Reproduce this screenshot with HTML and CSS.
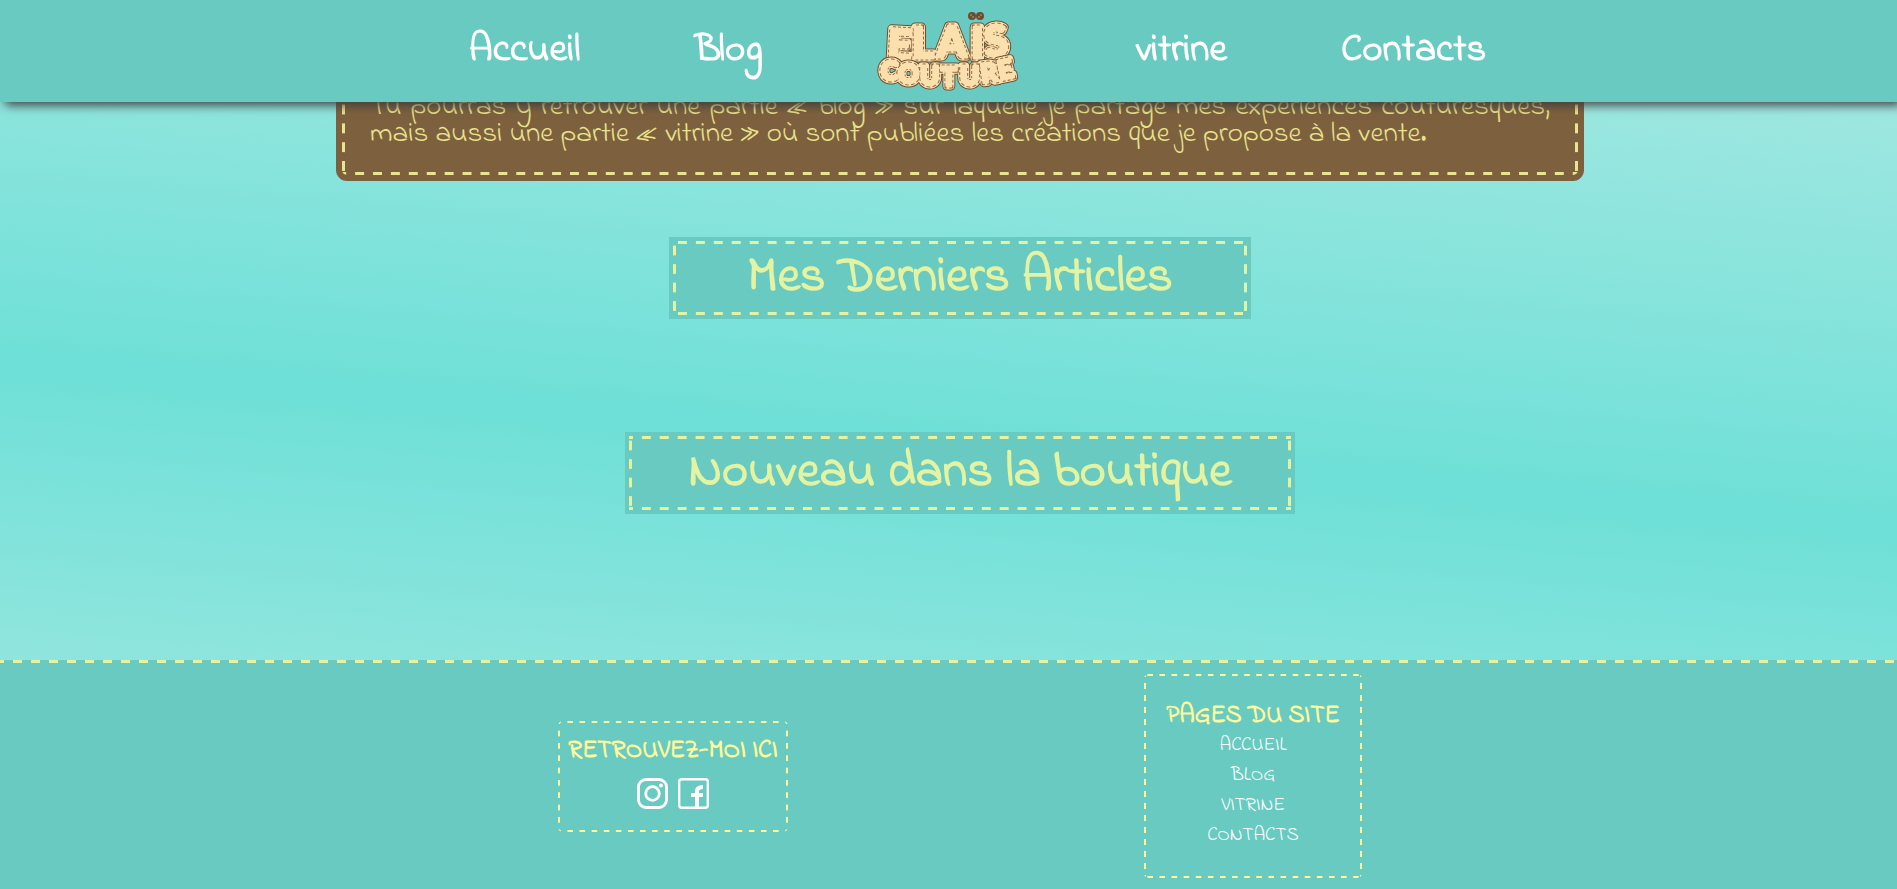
FILE: index.html
```
<!DOCTYPE html>
<html lang="fr">
<head>
<meta charset="utf-8">
<title>Elaïs Couture</title>
<link rel="stylesheet" href="styles.css">
</head>
<body>
<header class="site-header">
  <nav class="site-nav" aria-label="Navigation principale">
    <a href="#">Accueil</a>
    <a href="#">Blog</a>
    <a href="#" class="logo">
      <svg viewBox="0 0 145 90" role="img" aria-label="Elaïs Couture">
        <defs>
          <text id="elais" class="logo-top"><tspan x="10" y="53" rotate="3">E</tspan><tspan x="35" y="52">L</tspan><tspan x="60" y="51">A</tspan><tspan x="94" y="52">I</tspan><tspan x="109" y="51" rotate="-6">S</tspan></text>
          <text id="couture" class="logo-bottom"><tspan x="4" y="74">C</tspan><tspan x="21" y="77">O</tspan><tspan x="43" y="79">U</tspan><tspan x="64" y="80">T</tspan><tspan x="83" y="79">U</tspan><tspan x="105" y="77" rotate="-8">R</tspan><tspan x="123" y="74" rotate="-12">E</tspan></text>
        </defs>
        <use href="#elais" class="edge"/>
        <use href="#elais" class="fabric"/>
        <use href="#elais" class="stitch"/>
        <use href="#elais" class="middle"/>
        <use href="#couture" class="edge"/>
        <use href="#couture" class="fabric"/>
        <use href="#couture" class="stitch"/>
        <use href="#couture" class="middle"/>
        <g class="buttons">
          <circle cx="95" cy="10" r="4"/>
          <circle cx="103" cy="10" r="4"/>
        </g>
        <g class="holes">
          <circle cx="94" cy="9" r="1"/><circle cx="96" cy="11" r="1"/>
          <circle cx="102" cy="11" r="1"/><circle cx="104" cy="9" r="1"/>
        </g>
      </svg>
    </a>
    <a href="#">vitrine</a>
    <a href="#">Contacts</a>
  </nav>
</header>

<main class="content">
  <section class="intro">
    <p>Tu pourras y retrouver une partie « blog » sur laquelle je partage mes expériences couturesques, mais aussi une partie « vitrine » où sont publiées les créations que je propose à la vente.</p>
  </section>
  <h2 class="section-title">Mes Derniers Articles</h2>
  <h2 class="section-title">Nouveau dans la boutique</h2>
</main>

<footer class="site-footer">
  <section class="footer-box social">
    <h3>Retrouvez-moi ici</h3>
    <div class="icons">
      <a href="#" aria-label="Instagram">
        <svg viewBox="0 0 31 31"><rect x="1.500" y="1.500" width="28" height="28" rx="7.500" fill="none" stroke="#fff" stroke-width="2.800"/><circle cx="15.500" cy="15.500" r="6.800" fill="none" stroke="#fff" stroke-width="2.800"/><circle cx="24" cy="7.500" r="2" fill="#fff"/></svg>
      </a>
      <a href="#" aria-label="Facebook">
        <svg viewBox="0 0 31 31"><rect x="1.200" y="1.200" width="28.600" height="28.600" rx="2.500" fill="none" stroke="#fff" stroke-width="2.400"/><path d="M17 30V19H13V15H17V13Q17 7 25 7V11Q21 11 21 13.500V15H25V19H21V30Z" fill="#fff"/></svg>
      </a>
    </div>
  </section>
  <section class="footer-box pages">
    <h3>Pages du site</h3>
    <ul>
      <li><a href="#">Accueil</a></li>
      <li><a href="#">Blog</a></li>
      <li><a href="#">vitrine</a></li>
      <li><a href="#">Contacts</a></li>
    </ul>
  </section>
</footer>
</body>
</html>
```
FILE: styles.css
```
* {
  box-sizing: border-box;
}

body {
  margin: 0;
  min-height: 100vh;
  display: flex;
  flex-direction: column;
  font-family: "Indie Flower", "Lato", sans-serif;
  background: linear-gradient(185deg, #aae9e3 0%, #6ee0d7 50%, #aae9e3 100%);
}

h2,
h3,
p,
ul {
  margin: 0;
  padding: 0;
}

a {
  color: #fff;
  text-decoration: none;
}

.site-header {
  position: fixed;
  inset: 0 0 auto 0;
  z-index: 1;
  background: #69cac1;
  box-shadow: 5px 3px 10px #3c3c3c;
}

.site-nav {
  display: flex;
  justify-content: center;
  align-items: center;
  gap: 114px;
  height: 102px;
  padding-left: 58px;
  font-size: 39px;
  line-height: 54px;
  font-weight: bold;
}

.logo svg {
  display: block;
  width: 145px;
  height: 90px;
}

.logo-top {
  font: 900 42px "Lato", sans-serif;
}

.logo-bottom {
  font: 900 26px "Lato", sans-serif;
}

.edge {
  fill: #6b4c30;
  stroke: #6b4c30;
  stroke-width: 9px;
  stroke-linejoin: round;
}

.fabric {
  fill: #fbe0ae;
  stroke: #fbe0ae;
  stroke-width: 7px;
  stroke-linejoin: round;
}

.stitch {
  fill: none;
  stroke: #8d6a45;
  stroke-width: 5px;
  stroke-dasharray: 3 2;
}

.middle {
  fill: #fbe0ae;
  stroke: #fbe0ae;
  stroke-width: 3px;
  stroke-linejoin: round;
}

.buttons {
  fill: #6b4c30;
}

.holes {
  fill: #a98357;
}

.content {
  display: flex;
  flex-direction: column;
  align-items: center;
  min-height: 660px;
  padding: 62px 0 0 23px;
}

/* Stitched edge: each tile is half a stitch, a gap and half a stitch. */
.intro,
.section-title,
.footer-box,
.site-footer {
  --x: linear-gradient(90deg, var(--thread) 25%, transparent 25% 75%, var(--thread) 75%);
  --y: linear-gradient(var(--thread) 25%, transparent 25% 75%, var(--thread) 75%);
  background:
    var(--x) top / var(--step) var(--weight) round no-repeat,
    var(--x) bottom / var(--step) var(--weight) round no-repeat,
    var(--y) left / var(--weight) var(--step) no-repeat round,
    var(--y) right / var(--weight) var(--step) no-repeat round,
    var(--cloth);
}

.intro {
  --thread: #eae48e;
  --cloth: #7d613e;
  --step: 18px;
  --weight: 3px;
  width: 1236px;
  max-width: 94%;
  padding: 32px 28px 27px;
  border-radius: 5px;
  box-shadow: 0 0 0 6px #7d613e;
  color: #e8e28c;
  font-size: 29px;
  line-height: 27px;
  text-align: justify;
}

.section-title {
  --thread: #e3f3a1;
  --cloth: #69cac1;
  --step: 18px;
  --weight: 3px;
  min-width: 574px;
  margin-top: 66px;
  padding: 2px 59px;
  box-shadow: 0 0 0 4px #69cac1;
  color: #e3f3a1;
  font-size: 50px;
  line-height: 70px;
  text-align: center;
}

.section-title + .section-title {
  margin-top: 121px;
}

.site-footer {
  --thread: #e3f3a1;
  --step: 18px;
  --weight: 3px;
  flex: 1;
  display: flex;
  justify-content: center;
  align-items: center;
  gap: 356px;
  padding: 3px 0 0 23px;
  background: var(--x) 0 0 / var(--step) var(--weight) repeat-x, #69cac1;
}

.footer-box {
  --thread: #fff99b;
  --cloth: #69cac1;
  --step: 12px;
  --weight: 2px;
  border-radius: 5px;
  text-align: center;
  text-transform: uppercase;
}

.footer-box h3 {
  color: #fff99b;
  font-size: 25px;
  line-height: 30px;
}

.social {
  min-width: 230px;
  padding: 15px 10px 23px;
}

.icons {
  display: flex;
  justify-content: center;
  gap: 10px;
  padding-top: 12px;
}

.icons svg {
  display: block;
  width: 31px;
  height: 31px;
}

.pages {
  min-width: 218px;
  padding: 27px 18px;
}

.pages ul {
  list-style: none;
  font-size: 19px;
  line-height: 30px;
}
```
